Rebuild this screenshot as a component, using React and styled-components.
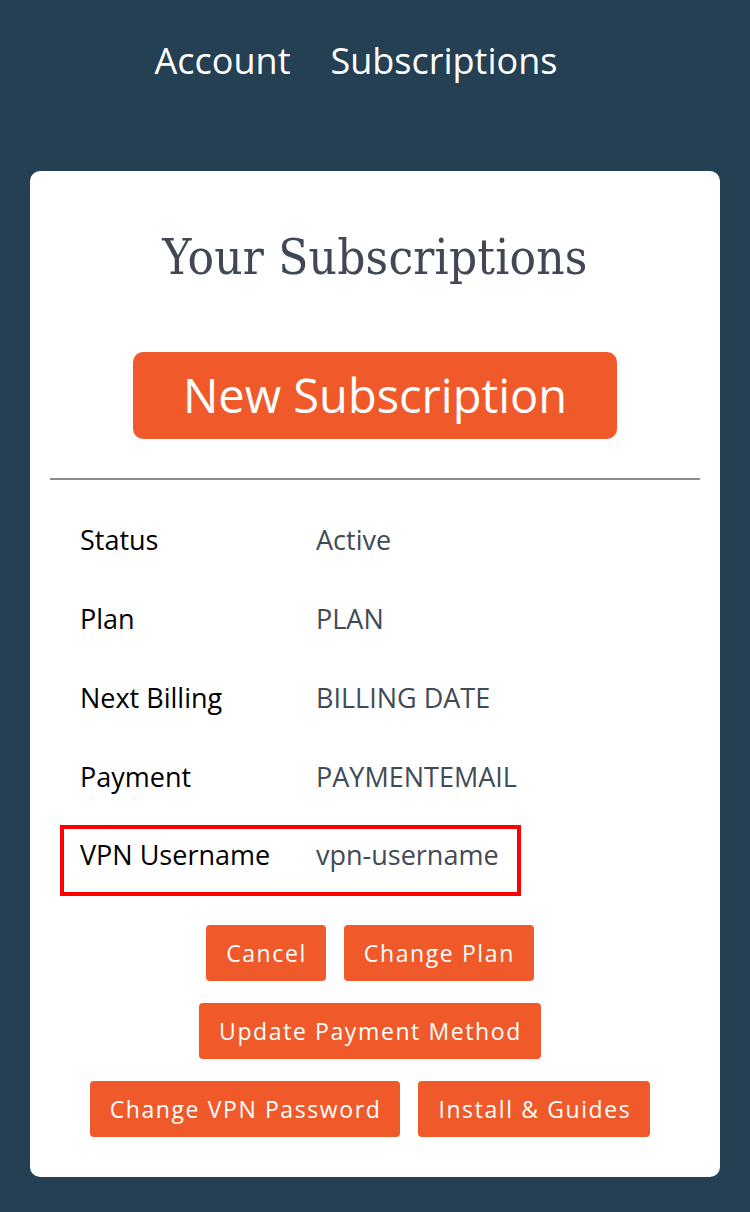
import React from 'react'
import styled, { createGlobalStyle } from 'styled-components'

const GlobalStyle = createGlobalStyle`
    html, body {
        margin: 0;
        padding: 0;
        background-color: #264053;
        font-family: "Open Sans", "DejaVu Sans", sans-serif;
    }
    * {
        box-sizing: border-box;
    }
`

const details = [
    { label: 'Status', value: 'Active' },
    { label: 'Plan', value: 'PLAN' },
    { label: 'Next Billing', value: 'BILLING DATE' },
    { label: 'Payment', value: 'PAYMENTEMAIL' },
    { label: 'VPN Username', value: 'vpn-username', highlight: true },
]

const actions = ['Cancel', 'Change Plan', 'Update Payment Method', 'Change VPN Password', 'Install & Guides']

export default function App() {
    return (
        <Page>
            <GlobalStyle />
            <Nav>
                <NavLink href="#">Account</NavLink>
                <NavLink href="#">Subscriptions</NavLink>
            </Nav>
            <Card>
                <Title>Your Subscriptions</Title>
                <BigButton>New Subscription</BigButton>
                <Divider />
                <Details>
                    {details.map(d => (
                        <Row key={d.label} $highlight={d.highlight}>
                            <Label>{d.label}</Label>
                            <Value>{d.value}</Value>
                        </Row>
                    ))}
                </Details>
                <Actions>
                    {actions.map(a => (
                        <SmallButton key={a}>{a}</SmallButton>
                    ))}
                </Actions>
            </Card>
        </Page>
    )
}

const Page = styled.div`
    min-height: 1212px;
    padding: 0 30px 35px;
    background-color: #264053;
`

const Nav = styled.nav`
    display: flex;
    justify-content: center;
    padding: 36px 0 0 2px;
    height: 171px;
`

const NavLink = styled.a`
    color: #ffffff;
    text-decoration: none;
    font-size: 36px;
    line-height: 49px;
    margin-right: 40px;
`

const Card = styled.div`
    background: #ffffff;
    border-radius: 10px;
    padding: 58px 20px 40px;
    display: flex;
    flex-direction: column;
    align-items: center;
`

const Title = styled.h1`
    margin: 0;
    font-family: "DejaVu Serif Condensed", "DejaVu Serif", serif;
    font-weight: normal;
    font-size: 49px;
    line-height: 58px;
    color: #3f4853;
    letter-spacing: 0.2px;
`

const BigButton = styled.button`
    margin-top: 65px;
    border: none;
    border-radius: 10px;
    background-color: #f05a2b;
    color: #ffffff;
    font-family: "Open Sans", sans-serif;
    font-size: 47px;
    line-height: 63px;
    padding: 12px 50px;
    cursor: pointer;
`

const Divider = styled.hr`
    align-self: stretch;
    margin: 39px 0 0;
    border: none;
    border-top: 2px solid #8c8c8c;
`

const Details = styled.div`
    align-self: flex-start;
    margin: 20px 0 0 10px;
    width: 461px;
    display: flex;
    flex-direction: column;
`

const Row = styled.div`
    display: grid;
    grid-template-columns: 236px 1fr;
    align-items: ${p => (p.$highlight ? 'start' : 'center')};
    height: ${p => (p.$highlight ? '71px' : '79px')};
    margin-top: ${p => (p.$highlight ? '9px' : '0')};
    padding: ${p => (p.$highlight ? '7px 16px 0' : '0 20px')};
    border: ${p => (p.$highlight ? '4px solid #ff0000' : 'none')};
    font-size: 27px;
    line-height: 37px;
`

const Label = styled.span`
    color: #000000;
`

const Value = styled.span`
    color: #414b56;
    white-space: nowrap;
`

const Actions = styled.div`
    margin-top: 29px;
    width: 630px;
    padding-right: 10px;
    display: flex;
    flex-wrap: wrap;
    justify-content: center;
    column-gap: 18px;
    row-gap: 22px;
`

const SmallButton = styled.button`
    border: none;
    border-radius: 4px;
    background-color: #f05a2b;
    color: #ffffff;
    font-family: "Open Sans", sans-serif;
    font-size: 23px;
    letter-spacing: 1.6px;
    line-height: 30px;
    padding: 13px 19px 13px 20px;
    cursor: pointer;
`
